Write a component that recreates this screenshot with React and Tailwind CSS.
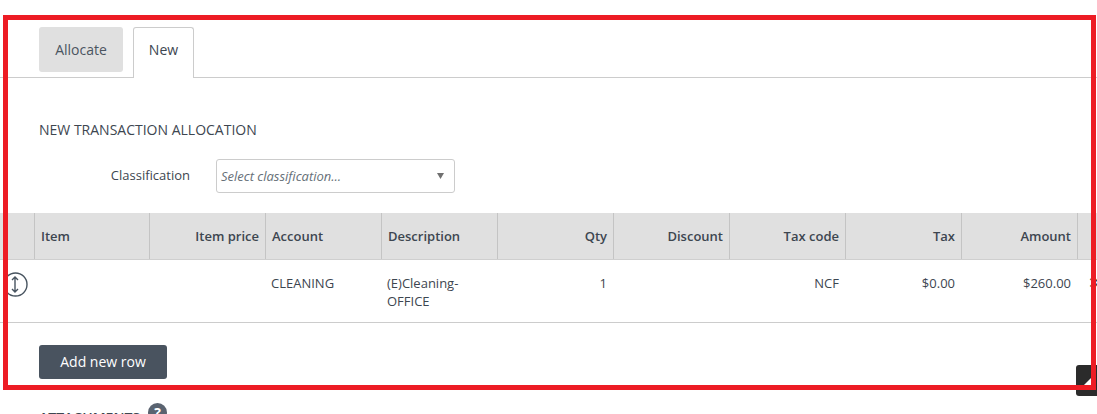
const cols = [
  ["Item", "left", "w-[115px]"],
  ["Item price", "right", "w-[116px]"],
  ["Account", "left", "w-[116px]"],
  ["Description", "left", "w-[116px]"],
  ["Qty", "right", "w-[116px]"],
  ["Discount", "right", "w-[116px]"],
  ["Tax code", "right", "w-[116px]"],
  ["Tax", "right", "w-[116px]"],
  ["Amount", "right", "w-[116px]"],
];
const row = ["", "", "CLEANING", "(E)Cleaning-OFFICE", "1", "", "NCF", "$0.00", "$260.00"];

export default function App() {
  return (
    <div className="relative h-[414px] w-[1097px] overflow-hidden bg-white font-['Open_Sans',sans-serif] text-[13px] text-[#3d4650]">
      <div className="flex h-[78px] items-start gap-[10px] border-b border-[#cccccc] pl-[39px] pt-[27px]">
        <div className="flex h-[45px] w-[84px] items-center justify-center rounded-[3px] bg-[#e0e0e0] text-[14px] text-[#4b5560]">Allocate</div>
        <div className="flex h-[51px] w-[61px] items-center justify-center rounded-t-[3px] border border-b-0 border-[#cccccc] bg-white pb-[7px] text-[14px]">New</div>
      </div>
      <h2 className="ml-[39px] mt-[43px] text-[14px] leading-[18px] font-normal text-[#3d4650]">NEW TRANSACTION ALLOCATION</h2>
      <div className="mt-[20px] flex items-center">
        <label className="w-[190px] pb-[2px] text-right leading-[18px]">Classification</label>
        <div className="ml-[26px] flex h-[34px] w-[239px] items-center justify-between rounded-[3px] border border-[#cccccc] pl-[4px] pr-[10px] text-[13px] italic text-[#666f78]">
          <span className="pt-[1px]">Select classification...</span>
          <svg width="7" height="6" viewBox="0 0 7 6"><path d="M0 0h7L3.5 6z" fill="#707070" /></svg>
        </div>
      </div>
      <div className="mt-[20px] flex h-[47px] border-b border-[#cfcfcf] bg-[#e0e0e0] font-semibold">
        <div className="w-[35px] border-r border-[#c4c4c4]" />
        {cols.map(([label, align, w]) => (
          <div key={label} className={`${w} flex items-center border-r border-[#c4c4c4] px-[6px] pt-[2px] ${align === "right" ? "justify-end" : "justify-start"}`}>
            {label}
          </div>
        ))}
      </div>
      <div className="flex h-[63px] border-b border-[#cccccc]">
        <div className="w-[35px] shrink-0 pl-[3px] pt-[12px]">
          <svg width="25" height="25" viewBox="0 0 25 25" fill="none" stroke="#47535f" strokeWidth="1.4">
            <circle cx="12.5" cy="12.5" r="11.5" />
            <path d="M12 5v15M9 8l3-3 3 3M9 17l3 3 3-3" />
          </svg>
        </div>
        {cols.map(([label, align, w], i) => (
          <div key={label} className={`${w} shrink-0 whitespace-normal pl-[5px] pr-[7px] pt-[14px] leading-[18px] ${align === "right" ? "text-right" : "text-left"}`}>
            {label === "Description" ? <>(E)Cleaning-<br />OFFICE</> : row[i]}
          </div>
        ))}
        <div className="shrink-0 pl-[10px] pt-[13px] text-[15px] leading-[18px]">✕</div>
      </div>
      <button className="ml-[39px] mt-[22px] flex h-[34px] w-[128px] items-center justify-center rounded-[3px] bg-[#49535f] pb-[2px] text-[14px] text-white">Add new row</button>
      <div className="ml-[39px] mt-[30px] flex items-start gap-[8px]">
        <span className="text-[14px] font-semibold leading-[18px]">ATTACHMENTS</span>
        <span className="mt-[-6px] flex h-[19px] w-[19px] items-center justify-center rounded-full bg-[#5a6370] text-[14px] font-bold text-white">?</span>
      </div>
      <div className="absolute left-[1076px] top-[365px] h-[31px] w-[30px] rounded-[3px] bg-[#2b2b2b]">
        <svg className="absolute left-[7px] top-[13px]" width="8" height="8" viewBox="0 0 8 8"><path d="M8 0v8H0z" fill="#fff" /></svg>
      </div>
      <div className="pointer-events-none absolute left-[3px] top-[15px] h-[375px] w-[1093px] border-[5px] border-[#ed1c24]" />
    </div>
  );
}
